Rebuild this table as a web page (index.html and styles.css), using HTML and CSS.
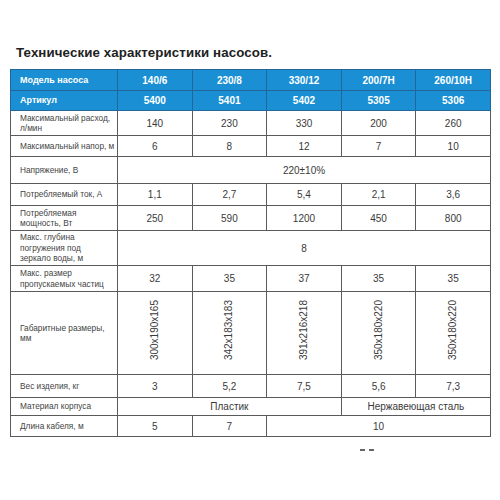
FILE: index.html
```html
<!DOCTYPE html>
<html lang="ru">
<head>
<meta charset="utf-8">
<link rel="stylesheet" href="styles.css">
</head>
<body>
<div class="page">
  <h1 class="title">Технические характеристики насосов.</h1>
  <table class="spec">
    <colgroup>
      <col class="c-label"><col class="c-val"><col class="c-val"><col class="c-val"><col class="c-val"><col class="c-val">
    </colgroup>
    <tr class="head r1">
      <td class="lbl">Модель насоса</td><td>140/6</td><td>230/8</td><td>330/12</td><td>200/7H</td><td>260/10H</td>
    </tr>
    <tr class="head r2">
      <td class="lbl">Артикул</td><td>5400</td><td>5401</td><td>5402</td><td>5305</td><td>5306</td>
    </tr>
    <tr class="r3">
      <td class="lbl">Максимальный расход, л/мин</td><td>140</td><td>230</td><td>330</td><td>200</td><td>260</td>
    </tr>
    <tr class="r4">
      <td class="lbl">Максимальный напор, м</td><td>6</td><td>8</td><td>12</td><td>7</td><td>10</td>
    </tr>
    <tr class="r5">
      <td class="lbl">Напряжение, В</td><td colspan="5">220±10%</td>
    </tr>
    <tr class="r6">
      <td class="lbl">Потребляемый ток, А</td><td>1,1</td><td>2,7</td><td>5,4</td><td>2,1</td><td>3,6</td>
    </tr>
    <tr class="r7">
      <td class="lbl">Потребляемая мощность, Вт</td><td>250</td><td>590</td><td>1200</td><td>450</td><td>800</td>
    </tr>
    <tr class="r8">
      <td class="lbl">Макс. глубина<br>погружения под<br>зеркало воды, м</td><td colspan="5">8</td>
    </tr>
    <tr class="r9">
      <td class="lbl">Макс. размер пропускаемых частиц</td><td>32</td><td>35</td><td>37</td><td>35</td><td>35</td>
    </tr>
    <tr class="r10">
      <td class="lbl">Габаритные размеры, мм</td>
      <td><span class="vert">300x190x165</span></td>
      <td><span class="vert">342x183x183</span></td>
      <td><span class="vert">391x216x218</span></td>
      <td><span class="vert">350x180x220</span></td>
      <td><span class="vert">350x180x220</span></td>
    </tr>
    <tr class="r11">
      <td class="lbl">Вес изделия, кг</td><td>3</td><td>5,2</td><td>7,5</td><td>5,6</td><td>7,3</td>
    </tr>
    <tr class="r12">
      <td class="lbl">Материал корпуса</td><td colspan="3">Пластик</td><td colspan="2">Нержавеющая сталь</td>
    </tr>
    <tr class="r13">
      <td class="lbl">Длина кабеля, м</td><td>5</td><td>7</td><td colspan="3">10</td>
    </tr>
  </table>
  <div class="pagenum"><span class="dash"></span><span class="dash"></span></div>
</div>
</body>
</html>
```
FILE: styles.css
```css
html, body {
  margin: 0;
  padding: 0;
  background: #fff;
}
.page {
  width: 500px;
  height: 500px;
  padding: 45px 0 0 10px;
  box-sizing: border-box;
  font-family: "Liberation Sans", Arial, sans-serif;
  color: #3a3a3a;
}
.title {
  margin: 0 0 8px 6px;
  font-size: 13.3px;
  line-height: 16px;
  font-weight: bold;
  color: #222;
  letter-spacing: 0.1px;
}
.spec {
  border-collapse: collapse;
  table-layout: fixed;
  width: 480px;
}
.c-label { width: 107px; }
.c-val { width: 74.6px; }
.spec td {
  border: 1px solid #5a5a5a;
  padding: 0;
  text-align: center;
  vertical-align: middle;
  font-size: 10px;
  line-height: 11px;
  color: #3a3a3a;
}
.spec td.lbl {
  text-align: left;
  padding: 0 0 0 9px;
  font-size: 8.3px;
  line-height: 10.5px;
  color: #444;
}
.head td {
  background: #1a8fd3;
  color: #fff;
  font-weight: bold;
  border-color: #22669a;
  font-size: 10px;
}
.head td.lbl {
  color: #fff;
  font-size: 9px;
}
.r1 { height: 21px; }
.r2 { height: 20px; }
.r3 { height: 25px; }
.r4 { height: 21px; }
.r5 { height: 27px; }
.r6 { height: 22px; }
.r7 { height: 25px; }
.r8 { height: 35px; }
.r9 { height: 26px; }
.r10 { height: 83px; }
.r11 { height: 23px; }
.r12 { height: 18px; }
.r13 { height: 21px; }
.vert {
  display: inline-block;
  writing-mode: vertical-rl;
  transform: rotate(180deg);
  font-size: 10px;
  line-height: 12px;
  margin-bottom: 4px;
}
.pagenum {
  display: flex;
  gap: 4px;
  margin: 12px 0 0 350px;
}
.dash {
  display: block;
  width: 5px;
  height: 2px;
  background: #666;
}
```
